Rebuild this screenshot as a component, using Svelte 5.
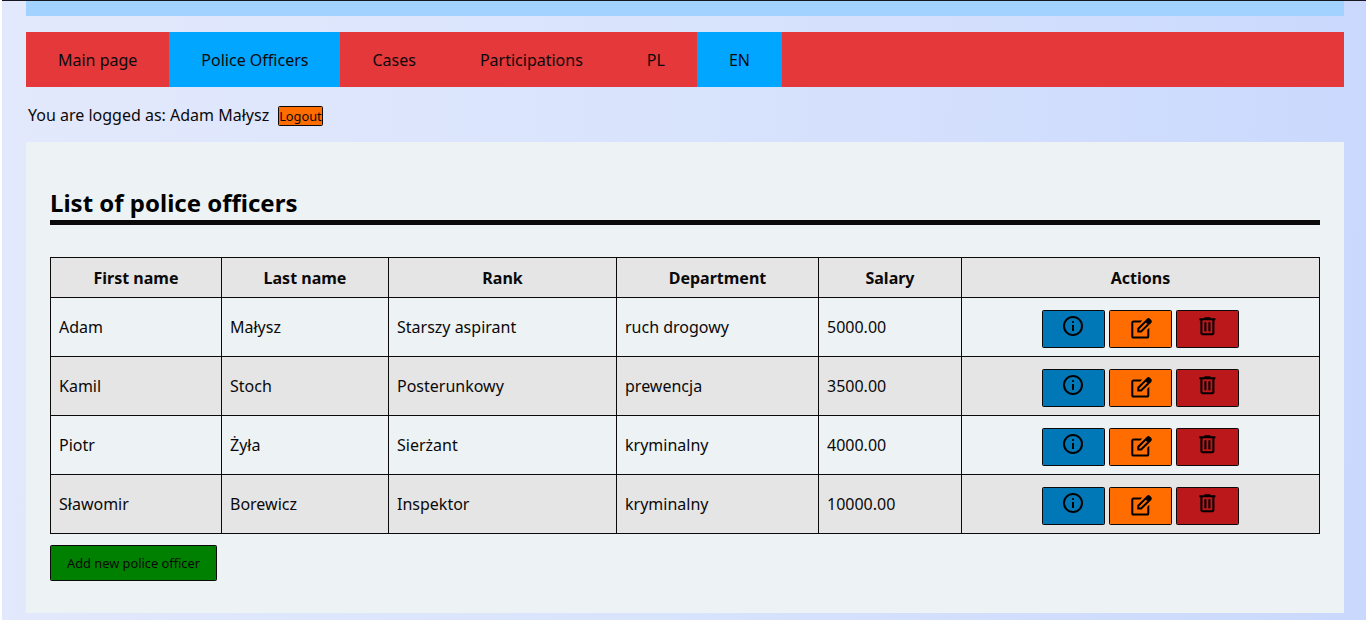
<script>
  const tabs = [
    { label: 'Main page' },
    { label: 'Police Officers', active: true },
    { label: 'Cases' },
    { label: 'Participations' },
    { label: 'PL' },
    { label: 'EN', active: true }
  ];
  const columns = ['First name', 'Last name', 'Rank', 'Department', 'Salary', 'Actions'];
  const officers = [
    ['Adam', 'Małysz', 'Starszy aspirant', 'ruch drogowy', '5000.00'],
    ['Kamil', 'Stoch', 'Posterunkowy', 'prewencja', '3500.00'],
    ['Piotr', 'Żyła', 'Sierżant', 'kryminalny', '4000.00'],
    ['Sławomir', 'Borewicz', 'Inspektor', 'kryminalny', '10000.00']
  ];
  const actions = [
    { kind: 'info', label: 'Details', path: 'M11 17h2v-6h-2Zm1-8q.425 0 .713-.288Q13 8.425 13 8t-.287-.713Q12.425 7 12 7t-.712.287Q11 7.575 11 8t.288.712Q11.575 9 12 9Zm0 13q-2.075 0-3.9-.788-1.825-.787-3.175-2.137-1.35-1.35-2.137-3.175Q2 14.075 2 12t.788-3.9q.787-1.825 2.137-3.175 1.35-1.35 3.175-2.138Q9.925 2 12 2t3.9.787q1.825.788 3.175 2.138 1.35 1.35 2.137 3.175Q22 9.925 22 12t-.788 3.9q-.787 1.825-2.137 3.175-1.35 1.35-3.175 2.137Q14.075 22 12 22Zm0-2q3.35 0 5.675-2.325Q20 15.35 20 12q0-3.35-2.325-5.675Q15.35 4 12 4 8.65 4 6.325 6.325 4 8.65 4 12q0 3.35 2.325 5.675Q8.65 20 12 20Z' },
    { kind: 'edit', label: 'Edit', shift: 'translate(0.3 0.9)', path: 'M5 23.7q-.825 0-1.413-.587Q3 22.525 3 21.7v-14q0-.825.587-1.413Q4.175 5.7 5 5.7h8.925l-2 2H5v14h14v-6.95l2-2v8.95q0 .825-.587 1.413-.588.587-1.413.587Zm11.175-17.425 1.425 1.4-6.6 6.6V15.7h1.4l6.625-6.625 1.425 1.4-7.2 7.225H9v-4.275Zm4.275 4.2-4.275-4.2 2.5-2.5q.6-.6 1.438-.6.837 0 1.412.6l1.4 1.425q.575.575.575 1.4T22.925 8Z' },
    { kind: 'delete', label: 'Delete', shift: 'translate(0.4 0.2)', path: 'M7 21q-.825 0-1.412-.587Q5 19.825 5 19V6H4V4h5V3h6v1h5v2h-1v13q0 .825-.587 1.413Q17.825 21 17 21ZM17 6H7v13h10ZM9 17h2V8H9Zm4 0h2V8h-2Z' }
  ];
</script>

<div class="page">
  <header></header>
  <nav>
    {#each tabs as tab}
      <a class:active={tab.active}>{tab.label}</a>
    {/each}
  </nav>
  <div class="session">
    <span>You are logged as: Adam Małysz</span>
    <button class="logout">Logout</button>
  </div>
  <main>
    <h2>List of police officers</h2>
    <table>
      <colgroup>
        <col class="first" /><col class="last" /><col class="rank" /><col class="department" /><col class="salary" /><col />
      </colgroup>
      <thead>
        <tr>{#each columns as column}<th>{column}</th>{/each}</tr>
      </thead>
      <tbody>
        {#each officers as officer}
          <tr>
            {#each officer as value}<td>{value}</td>{/each}
            <td>
              <div class="actions">
                {#each actions as action}
                  <button class={action.kind} aria-label={action.label}>
                    <svg viewBox="0 0 24 24" width="24" height="24"><path transform={action.shift} d={action.path} /></svg>
                  </button>
                {/each}
              </div>
            </td>
          </tr>
        {/each}
      </tbody>
    </table>
    <button class="add">Add new police officer</button>
  </main>
</div>

<style>
  :global(body) {
    background: #fff;
    overflow: hidden;
  }
  .page {
    box-sizing: border-box;
    height: 620px;
    margin-left: 2px;
    padding: 0 22px 0 24px;
    border-top: 1px solid #17181f;
    background: linear-gradient(92deg, #e3e9fc, #d8e3fc 50%, #ccdafd 92%, #cbd8fe);
    color: #0b090a;
    font: 16px/22px "Noto Sans", sans-serif;
  }
  header {
    height: 15px;
    background: #a2d2ff;
  }
  nav {
    display: flex;
    height: 55px;
    margin-top: 16px;
    background: #e5383b;
  }
  nav a {
    padding: 17px 32px 16px;
  }
  nav a.active {
    background: #00a6fb;
    background: #00a6ff;
  }
  .session {
    display: flex;
    align-items: center;
    gap: 9px;
    height: 55px;
    padding: 0 2px;
    box-sizing: border-box;
  }
  button {
    box-sizing: border-box;
    padding: 0;
    border: 1px solid #0b090a;
    border-radius: 1.5px;
    color: #0b090a;
    font: 12.8px/18px "Noto Sans", sans-serif;
  }
  .logout {
    height: 20px;
    margin-top: 2px;
    background: #ff6d00;
  }
  main {
    box-sizing: border-box;
    height: 471px;
    padding: 45px 24px 0;
    background: #edf2f4;
  }
  h2 {
    box-sizing: border-box;
    height: 38px;
    margin: 0 0 32px;
    border-bottom: 5px solid #0b090a;
    color: #000;
    font-size: 24px;
    line-height: 32px;
  }
  table {
    width: 1270px;
    border-collapse: collapse;
    table-layout: fixed;
  }
  .first { width: 171px; }
  .last { width: 167px; }
  .rank { width: 228px; }
  .department { width: 202px; }
  .salary { width: 143px; }
  th, td {
    box-sizing: border-box;
    padding: 0 8px;
    border: 1px solid #0b090a;
  }
  th {
    height: 40px;
    background: #e5e5e5;
  }
  td {
    height: 59px;
  }
  tbody tr:nth-child(even) {
    background: #e5e5e5;
  }
  .actions {
    display: flex;
    justify-content: center;
    gap: 4px;
    padding-top: 3px;
  }
  .actions button {
    display: flex;
    justify-content: center;
    width: 63px;
    height: 38px;
    padding: 3.5px 1px 0 0;
  }
  svg { overflow: visible; }
  .info { background: #0077b6; }
  .edit { background: #ff6d00; }
  .delete { background: #ba181b; }
  .add {
    display: block;
    width: 167px;
    height: 36px;
    margin-top: 11px;
    background: green;
  }
</style>
